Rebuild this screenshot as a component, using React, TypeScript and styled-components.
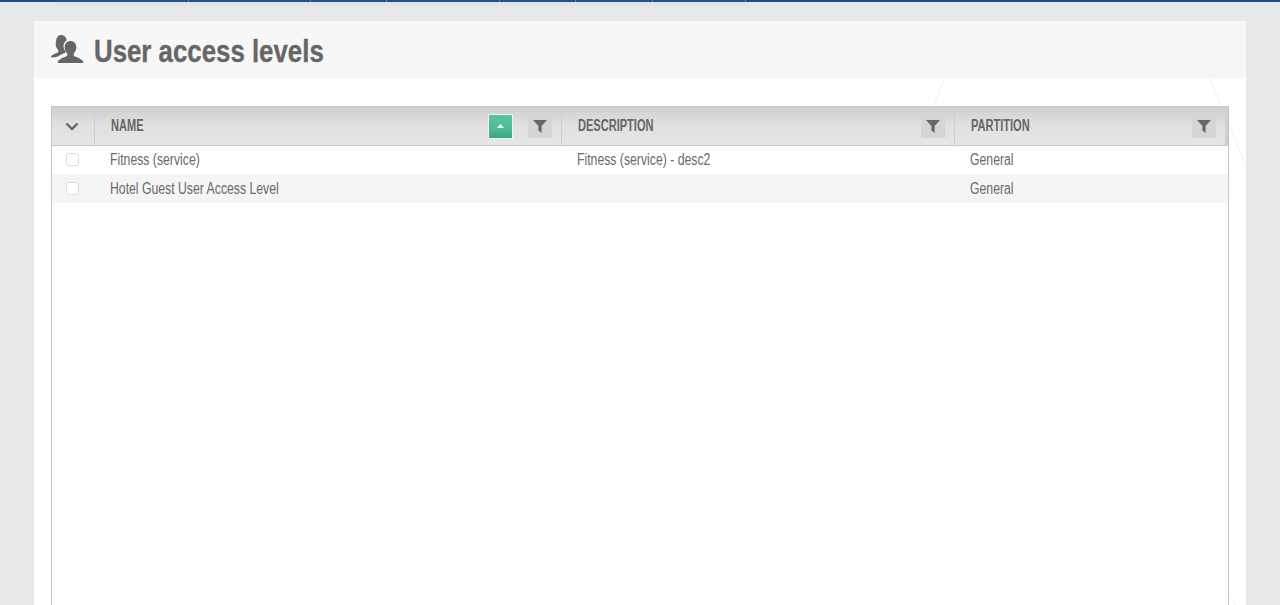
import React from "react";
import styled, { createGlobalStyle } from "styled-components";

const Global = createGlobalStyle`
  html, body { margin: 0; padding: 0; height: 605px; overflow: hidden; background: #e8e8e8; }
  * { box-sizing: border-box; }
`;
const Page = styled.div`
  height: 605px; overflow: hidden; display: flex; flex-direction: column;
  font-family: "Liberation Sans", Arial, sans-serif;
`;
const TopBar = styled.div`
  height: 2px; flex: none; background: #1f4f7f; display: flex; padding-left: 55px;
`;
const TopTab = styled.div<{ $w: number }>`
  width: ${p => p.$w}px; height: 2px; background: #24527f; border-right: 1px solid #5f88ab;
  box-shadow: 0 2px 4px rgba(0,0,0,.08);
`;
const Panel = styled.main`
  position: relative; flex: none; height: 640px; margin: 19px 34px 0; background: #fff; display: flex; flex-direction: column;
`;
const Lines = styled.svg`
  position: absolute; inset: 0; width: 100%; height: 100%; pointer-events: none;
`;
const Header = styled.header`
  height: 58px; flex: none; background: #f7f7f7; display: flex; align-items: center; padding-left: 17px; gap: 11px; position: relative;
`;
const Title = styled.h1`
  margin: 2px 0 0; font-size: 32px; font-weight: 700; color: #666; line-height: 1;
  display: inline-block; transform: scaleX(.807); transform-origin: left center; -webkit-text-stroke: .35px #666;
`;
const Body = styled.div`
  position: relative; flex: 1; padding: 27px 17px 0; display: flex; flex-direction: column;
`;
const Table = styled.div`
  flex: 1; border-left: 1px solid #c4c4c4; border-right: 1px solid #c4c4c4; display: flex; flex-direction: column;
`;
const COLS = "43px 467px 393px 1fr";
const HeadRow = styled.div`
  display: grid; grid-template-columns: ${COLS}; height: 40px; flex: none;
  background: linear-gradient(#cfcfcf, #e0e0e0 45%, #e6e6e6); border-bottom: 1px solid #c6c6c6; border-top: 1px solid #c8c8c8;
`;
const HeadCell = styled.div`
  display: flex; align-items: center; padding: 0 9px 0 16px; border-right: 1px solid #cfcfcf; gap: 15px;
  &:last-child { border-right: 3px solid #cfcfcf; }
`;
const ToggleCell = styled(HeadCell)`
  padding: 0 2px 0 0; justify-content: center;
`;
const HeadSlot = styled.div`flex: 1;`;
const HeadLabel = styled.span`
  display: inline-block; font-size: 16px; font-weight: 700; color: #666; text-transform: uppercase; line-height: 1;
  transform: scaleX(.69); transform-origin: left center;
`;
const SortBtn = styled.span`
  width: 25px; height: 25px; background: linear-gradient(#56c4a1, #4fbd9a 55%, #3ba584); border: 1px solid #f2f4f2; display: flex; align-items: center; justify-content: center;
`;
const FilterBtn = styled.span`
  width: 24px; height: 24px; background: #d5d5d5; display: flex; align-items: center; justify-content: center;
`;
const Row = styled.div<{ $alt?: boolean }>`
  display: grid; grid-template-columns: ${COLS}; height: ${p => (p.$alt ? 29 : 28)}px; align-items: center; flex: none;
  background: ${p => (p.$alt ? "#f5f5f5" : "#fff")};
`;
const CheckCell = styled.div`
  display: flex; justify-content: center; margin-right: 3px; margin-top: -1px;
`;
const Check = styled.span`
  width: 13px; height: 13px; border: 1px solid #dcdcdc; border-radius: 3px; background: #fff;
`;
const Cell = styled.div<{ $alt?: boolean }>`
  padding-left: 15px; line-height: 1; margin-top: ${p => (p.$alt ? 0 : -1)}px;
`;
const CellText = styled.span`
  display: inline-block; font-size: 16px; color: #6a6a6a; white-space: nowrap;
  transform: scaleX(.765); transform-origin: left center;
`;

const Funnel = () => (
  <svg width="14" height="13" viewBox="0 0 14 13"><path d="M0 0h14L8.600 6v7L5.400 10.400V6z" fill="#666" /></svg>
);
const Users = () => (
  <svg width="32" height="30" viewBox="0 0 32 30" fill="#666">
    <path d="M10 0c3.400 0 5.600 2.400 5.500 5.600-1.900 1-3 3.100-3 5.600 0 2 .8 3.800 2 5v1.500c-2.700 1-5 2.100-7.300 3.600-1 .6-2.600 1.100-7.200 1.100v-1c1.300-1.600 4-2.900 7.200-4v-2.400c-1.600-1.400-2.400-3.400-2.400-6C4.800 3.400 6.800 0 10 0z" />
    <path d="M19.500 6c3.600 0 5.800 2.600 5.800 6.200 0 2.600-.9 4.600-2.500 6v2.700c3.500 1.200 7 2.500 9.200 5.100v2H7v-2c2.200-2.600 5.700-3.900 9.200-5.100v-2.700c-1.600-1.400-2.500-3.400-2.500-6C13.700 8.600 15.900 6 19.500 6z" />
  </svg>
);

const rows = [
  { name: "Fitness (service)", desc: "Fitness (service) - desc2", part: "General" },
  { name: "Hotel Guest User Access Level", desc: "", part: "General" },
];
const tabs = [134, 122, 76, 113, 76, 77, 93];

export default function App() {
  return (
    <Page>
      <Global />
      <TopBar>{tabs.map((w, i) => <TopTab key={i} $w={w} />)}</TopBar>
      <Panel>
        <Lines aria-hidden="true">
          <path d="M910 58 L900 85 M1176 58 L1212 145 M1194 570 L1202 585" stroke="#f1f1f1" strokeWidth="1" fill="none" />
        </Lines>
        <Header>
          <Users />
          <Title>User access levels</Title>
        </Header>
        <Body>
          <Table>
            <HeadRow>
              <ToggleCell>
                <svg width="14" height="9" viewBox="0 0 14 9"><path d="M1.500 1.500 7 7l5.500-5.500" fill="none" stroke="#666" strokeWidth="2.400" /></svg>
              </ToggleCell>
              <HeadCell>
                <HeadSlot><HeadLabel>Name</HeadLabel></HeadSlot>
                <SortBtn><svg width="7" height="4" viewBox="0 0 7 4"><path d="M0 4 3.500 0 7 4z" fill="#fff" /></svg></SortBtn>
                <FilterBtn><Funnel /></FilterBtn>
              </HeadCell>
              <HeadCell>
                <HeadSlot><HeadLabel>Description</HeadLabel></HeadSlot>
                <FilterBtn><Funnel /></FilterBtn>
              </HeadCell>
              <HeadCell>
                <HeadSlot><HeadLabel>Partition</HeadLabel></HeadSlot>
                <FilterBtn><Funnel /></FilterBtn>
              </HeadCell>
            </HeadRow>
            {rows.map((r, i) => (
              <Row key={r.name} $alt={i % 2 === 1}>
                <CheckCell><Check /></CheckCell>
                <Cell $alt={i % 2 === 1}><CellText>{r.name}</CellText></Cell>
                <Cell $alt={i % 2 === 1}><CellText>{r.desc}</CellText></Cell>
                <Cell $alt={i % 2 === 1}><CellText>{r.part}</CellText></Cell>
              </Row>
            ))}
          </Table>
        </Body>
      </Panel>
    </Page>
  );
}
